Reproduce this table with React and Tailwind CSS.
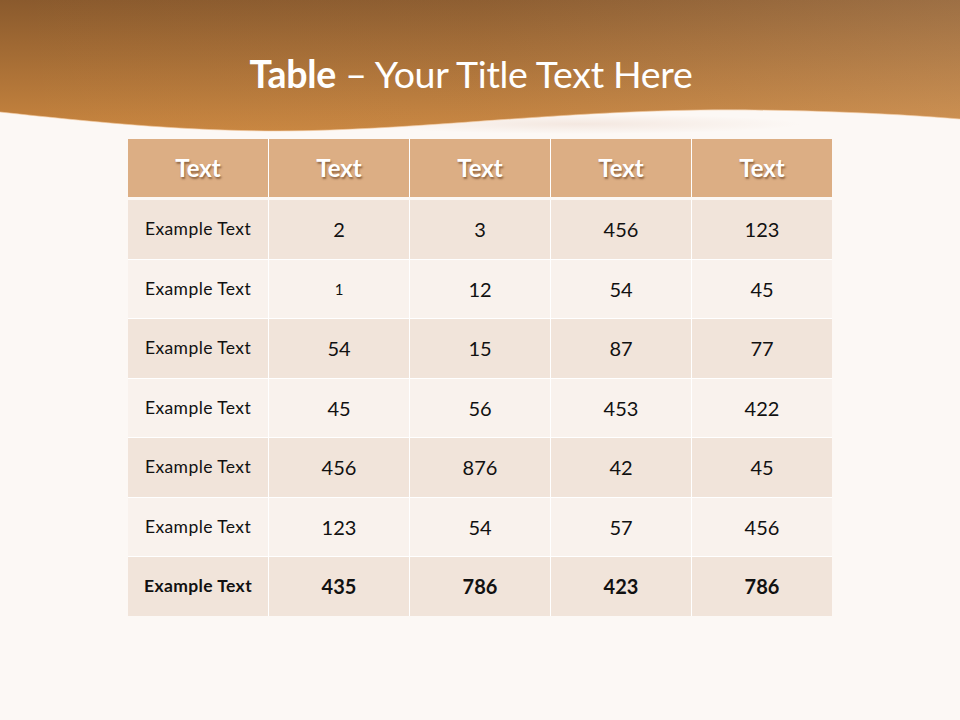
const HEAD = ['Text', 'Text', 'Text', 'Text', 'Text'];

const ROWS = [
  ['Example Text', '2', '3', '456', '123'],
  ['Example Text', '1', '12', '54', '45'],
  ['Example Text', '54', '15', '87', '77'],
  ['Example Text', '45', '56', '453', '422'],
  ['Example Text', '456', '876', '42', '45'],
  ['Example Text', '123', '54', '57', '456'],
];

const TOTAL = ['Example Text', '435', '786', '423', '786'];

function Banner() {
  return (
    <svg className="absolute inset-0" width="960" height="140" viewBox="0 0 960 140">
      <defs>
        <linearGradient id="brownV" x1="0" y1="0" x2="0" y2="1">
          <stop offset="0" stopColor="#8a5a2d" />
          <stop offset="1" stopColor="#c8853f" />
        </linearGradient>
        <linearGradient id="lightH" x1="0" y1="0" x2="1" y2="0">
          <stop offset="0" stopColor="#f4d2ae" stopOpacity="0" />
          <stop offset="0.5" stopColor="#f4d2ae" stopOpacity="0.04" />
          <stop offset="1" stopColor="#f4d2ae" stopOpacity="0.18" />
        </linearGradient>
        <radialGradient id="gloss" cx="0.5" cy="0.5" r="0.5">
          <stop offset="0" stopColor="#f3e6de" stopOpacity="0.9" />
          <stop offset="1" stopColor="#f3e6de" stopOpacity="0" />
        </radialGradient>
      </defs>
      <ellipse cx="580" cy="124" rx="220" ry="10" fill="url(#gloss)" />
      <path
        d="M0 0 H960 V119 C900 114 800 109 700 110 C560 112 450 126 330 130 C220 134 120 125 0 112 Z"
        fill="url(#brownV)"
      />
      <path
        d="M0 0 H960 V119 C900 114 800 109 700 110 C560 112 450 126 330 130 C220 134 120 125 0 112 Z"
        fill="url(#lightH)"
      />
      <path
        d="M960 119 C900 114 800 109 700 110 C560 112 450 126 330 130 C220 134 120 125 0 112"
        fill="none"
        stroke="#f3c89c"
        strokeWidth="1"
        strokeOpacity="0.6"
      />
    </svg>
  );
}

function Cell({ children, first, small, bold, bg }) {
  let size = 'text-[20px]';
  if (first) size = 'text-[17.5px] tracking-[0.4px]';
  else if (small) size = 'text-[15px]';
  return (
    <div className={`flex items-center justify-center h-[58.5px] ${bg} text-[#111] ${size} ${bold ? 'font-bold' : ''}`}>
      {children}
    </div>
  );
}

export default function App() {
  return (
    <div className="w-[960px] h-[720px] bg-[#fcf8f5] font-['Lato','Open_Sans',sans-serif] overflow-hidden">
      <div className="relative h-[139px]">
        <Banner />
        <h1 className="relative pt-[51px] pr-[18px] text-center text-[37.5px] leading-[46px] text-white tracking-[-0.3px]">
          <span className="font-bold">Table</span> – Your Title Text Here
        </h1>
      </div>

      <div className="ml-[128px] w-[704px]">
        <div className="grid grid-cols-5 gap-px bg-white">
          {HEAD.map((h, i) => (
            <div
              key={i}
              className="flex items-center justify-center h-[58px] bg-[#dcae84] text-white font-bold text-[24px] [text-shadow:1px_2px_2px_rgba(80,40,10,0.55)]"
            >
              {h}
            </div>
          ))}
        </div>
        <div className="mt-[3px] grid grid-cols-5 gap-px bg-white">
          {ROWS.map((row, r) =>
            row.map((v, c) => (
              <Cell
                key={`${r}-${c}`}
                first={c === 0}
                small={r === 1 && c === 1}
                bg={r % 2 === 0 ? 'bg-[#f1e4da]' : 'bg-[#f9f2ed]'}
              >
                {v}
              </Cell>
            ))
          )}
          {TOTAL.map((v, c) => (
            <Cell key={`t-${c}`} first={c === 0} bold bg="bg-[#f1e4da]">
              {v}
            </Cell>
          ))}
        </div>
      </div>
    </div>
  );
}
